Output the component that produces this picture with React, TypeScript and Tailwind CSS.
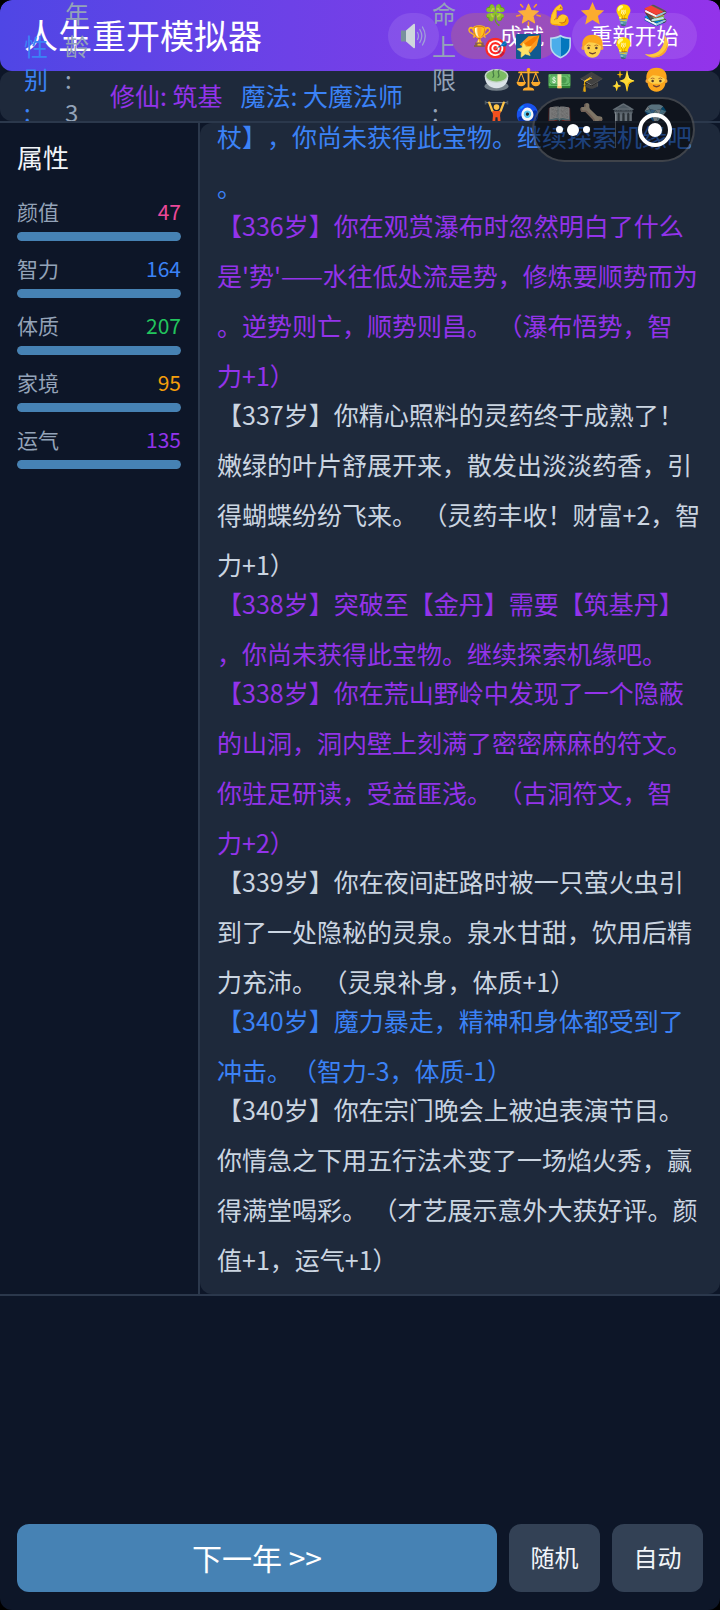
import React, { useState } from 'react'

interface Stat {
  label: string
  value: number
  max: number
  color: string
}

interface LogEntry {
  color: string
  lines: string[]
}

const stats: Stat[] = [
  { label: '颜值', value: 47, max: 10, color: 'text-[#ec4899]' },
  { label: '智力', value: 164, max: 10, color: 'text-[#3b82f6]' },
  { label: '体质', value: 207, max: 10, color: 'text-[#22c55e]' },
  { label: '家境', value: 95, max: 10, color: 'text-[#f59e0b]' },
  { label: '运气', value: 135, max: 10, color: 'text-[#9333ea]' },
]

const Icon: React.FC<{ children: React.ReactNode }> = ({ children }) => (
  <svg viewBox="0 0 24 24" className="size-[25px]" fill="none" aria-hidden="true">
    {children}
  </svg>
)

const starPath = 'M12 1l3.2 7.4 8 .7-6 5.4 1.8 8L12 18.300l-7 4.200 1.800-8-6-5.400 8-.7z'

const GlowingStar = () => (
  <Icon>
    <path d="M12 3l2.700 6.200 6.800.6-5.200 4.500 1.600 6.700-5.900-3.500L6.100 21l1.600-6.700L2.500 9.800l6.800-.6z" fill="#fcb03b" stroke="#fcb03b" strokeLinejoin="round" />
    <path d="M4.500 3.500l2 2.200M19.500 3.500l-2 2.200M.8 14.500l3-.9M23.200 14.500l-3-.9M12 20.500v3" stroke="#fb9a2b" strokeWidth="1.500" strokeLinecap="round" />
  </Icon>
)

const Star = () => (
  <Icon>
    <path d={starPath} fill="#fcac2e" />
  </Icon>
)

const ShootingStar = () => (
  <Icon>
    <rect width="24" height="24" rx="1" fill="#11598f" />
    <path d="M3.500 10L12 2.200l10.500-.7L20 11l-6 7z" fill="#fb9a1e" />
    <path d="M8 9l9-6 5-1.500-3 5-6 6z" fill="#f57c00" />
    <path d="M7 8.500l2.600 4 5-.4-2.800 3.900 1.800 4.600-4.700-1.300-4 3 .2-5-4-2.800 4.700-1.300z" fill="#fee268" stroke="#fee268" strokeWidth=".6" strokeLinejoin="round" />
  </Icon>
)

const Shield = () => (
  <Icon>
    <path d="M12 .8c3 2 6.500 2.500 10 2.600v7.800c0 5.600-4 9.800-10 12.200C6 21 2 16.800 2 11.200V3.400C5.500 3.300 9 2.800 12 .8z" fill="#b8d9ef" />
    <path d="M12 2.600c2.700 1.500 5.500 2 8.500 2.200v6.400c0 4.700-3.200 8.300-8.500 10.600z" fill="#0277bd" />
    <path d="M12 2.600c-2.700 1.500-5.500 2-8.500 2.200v6.400c0 4.700 3.200 8.300 8.500 10.600z" fill="#4badea" />
  </Icon>
)

const Face = ({ beard }: { beard?: boolean }) => (
  <Icon>
    <path d="M2.500 13C1 5 5.500.8 12 .8S23 5 21.500 13z" fill="#fba51c" />
    <circle cx="3.300" cy="13.500" r="1.900" fill="#f2a33a" />
    <circle cx="20.700" cy="13.500" r="1.900" fill="#f2a33a" />
    <path d="M4 11.500c2-1.500 3.500-3.500 5-3.500 3 0 8 1 11 3.500v2c0 5.500-3.500 9.300-8 9.300s-8-3.800-8-9.300z" fill="#fdd04c" />
    {beard && <path d="M3.300 13c2.500 1.500 4 3 5.200 3h7c1.200 0 2.700-1.500 5.200-3 .3 6.500-3.300 10.700-8.700 10.700S3 19.500 3.300 13z" fill="#fba51c" />}
    <circle cx="8.300" cy="13.500" r="1.200" fill="#50382f" />
    <circle cx="15.700" cy="13.500" r="1.200" fill="#50382f" />
    <path d="M6.800 11q1.500-1 3 0M14.200 11q1.500-1 3 0" stroke="#a8652b" strokeWidth=".9" strokeLinecap="round" />
    <path d="M9.300 18q2.700 1.800 5.400 0" stroke="#6d4033" strokeWidth="1.300" strokeLinecap="round" />
  </Icon>
)

const Moon = () => (
  <Icon>
    <path d="M19.500 1c5 6 4.500 14-1 18.500S5 23.500.8 19.300C7 20.500 12.500 19 16 14.500S20 5.500 19.500 1z" fill="#fdc93d" />
    <path d="M22.500 8c.7 5-1 9-4 11.500S10 23.500 4 21.500c6 .8 10-.5 13.500-3.500S22 12 22.500 8z" fill="#f9a22c" />
  </Icon>
)

const Tea = () => (
  <Icon>
    <ellipse cx="12" cy="18.500" rx="11.500" ry="4.300" fill="#75818a" />
    <path d="M.7 8.500h22.600c0 7-4.300 12-11.300 12S.7 15.500.7 8.500z" fill="#dbe3e8" />
    <ellipse cx="12" cy="8.500" rx="11.300" ry="6.500" fill="#c6d6c8" />
    <ellipse cx="12" cy="8.500" rx="10" ry="5.400" fill="#7cbb63" />
    <path d="M9.500 3c-3 2.500 2 4-1 7M14.500 3c-3 2.500 2 4-1 7" stroke="#457b45" strokeWidth="1.200" strokeLinecap="round" />
  </Icon>
)

const Scales = () => (
  <Icon>
    <path d="M12 2v18M3 5.200h18" stroke="#fba92c" strokeWidth="1.800" strokeLinecap="round" />
    <circle cx="12" cy="2.800" r="1.800" fill="#fba92c" />
    <path d="M5 5.500L1.500 15h7zM19 5.500L15.500 15h7z" stroke="#fba92c" strokeWidth="1" />
    <path d="M.5 14.500h9c-.5 3-2 4-4.500 4s-4-1-4.500-4zM14.500 14.500h9c-.5 3-2 4-4.500 4s-4-1-4.500-4zM6.500 22.500c0-2 2-3 5.500-3s5.500 1 5.500 3z" fill="#fba92c" />
  </Icon>
)

const Lifter = () => (
  <Icon>
    <path d="M1 2.500h22" stroke="#7c8790" strokeWidth="1" />
    <path d="M1.500.8v3.400M22.500.8v3.400" stroke="#4d5960" strokeWidth="1.600" />
    <path d="M5 2.500l3 8 2 1.500M19 2.500l-3 8-2 1.500" stroke="#fdc447" strokeWidth="2.200" strokeLinecap="round" strokeLinejoin="round" />
    <circle cx="12" cy="6.800" r="2.700" fill="#fdc447" />
    <path d="M8 10.500h8l-.8 6h-6.400z" fill="#f4511e" />
    <path d="M9.800 16l-.5 6.500M14.200 16l.5 6.500" stroke="#f4511e" strokeWidth="2.600" strokeLinecap="round" />
  </Icon>
)

const Speaker: React.FC<{ muted: boolean }> = ({ muted }) => (
  <svg viewBox="0 0 27 26" className="h-[26px] w-[27px]" fill="none" aria-hidden="true">
    <path d="M1 7.500h5v11H1z" fill="#78909c" />
    <path d="M6 7.500L13.500 1q1.500-1 1.500 1v22q0 2-1.500 1L6 18.500z" fill="#cfd8dc" />
    {!muted && (
      <path
        d="M17.500 9.500q2 3.500 0 7M19.800 6.500q4 6.500 0 13M22.500 4q5.500 9 0 18"
        stroke="#a0a0d8"
        strokeWidth="1.300"
        strokeLinecap="round"
      />
    )}
  </svg>
)

const talents: React.ReactNode[] = [
  '🍀', <GlowingStar />, '💪', <Star />, '💡', '📚',
  '🎯', <ShootingStar />, <Shield />, <Face />, '💡', <Moon />,
  <Tea />, <Scales />, '💵', '🎓', '✨', <Face beard />,
  <Lifter />, '🧿', '📖', '🦴', '🏛️', '💎',
]

const magic = 'text-[#3b82f6]'
const immortal = 'text-[#9333ea]'
const normal = 'text-[#cbd5e1]'

const logs: LogEntry[] = [
  { color: magic, lines: ['杖】，你尚未获得此宝物。继续探索机缘吧', '。'] },
  {
    color: immortal,
    lines: [
      '【336岁】你在观赏瀑布时忽然明白了什么',
      "是'势'——水往低处流是势，修炼要顺势而为",
      '。逆势则亡，顺势则昌。 （瀑布悟势，智',
      '力+1）',
    ],
  },
  {
    color: normal,
    lines: [
      '【337岁】你精心照料的灵药终于成熟了！',
      '嫩绿的叶片舒展开来，散发出淡淡药香，引',
      '得蝴蝶纷纷飞来。 （灵药丰收！财富+2，智',
      '力+1）',
    ],
  },
  {
    color: immortal,
    lines: ['【338岁】突破至【金丹】需要【筑基丹】', '，你尚未获得此宝物。继续探索机缘吧。'],
  },
  {
    color: immortal,
    lines: [
      '【338岁】你在荒山野岭中发现了一个隐蔽',
      '的山洞，洞内壁上刻满了密密麻麻的符文。',
      '你驻足研读，受益匪浅。 （古洞符文，智',
      '力+2）',
    ],
  },
  {
    color: normal,
    lines: [
      '【339岁】你在夜间赶路时被一只萤火虫引',
      '到了一处隐秘的灵泉。泉水甘甜，饮用后精',
      '力充沛。 （灵泉补身，体质+1）',
    ],
  },
  {
    color: magic,
    lines: ['【340岁】魔力暴走，精神和身体都受到了', '冲击。（智力-3，体质-1）'],
  },
  {
    color: normal,
    lines: [
      '【340岁】你在宗门晚会上被迫表演节目。',
      '你情急之下用五行法术变了一场焰火秀，赢',
      '得满堂喝彩。 （才艺展示意外大获好评。颜',
      '值+1，运气+1）',
    ],
  },
]

const Header: React.FC = () => {
  const [muted, setMuted] = useState<boolean>(false)

  return (
    <header className="flex h-[71px] shrink-0 items-center rounded-xl bg-linear-to-r from-[#4f46e5] to-[#9333ea] pr-[23px] pl-6 text-white">
      <h1 className="flex-1 pb-[2px] text-[34px] leading-[48px] whitespace-nowrap">人生重开模拟器</h1>
      <div className="flex gap-3 text-[22px]">
        <button
          aria-label="声音"
          onClick={() => setMuted(!muted)}
          className="flex h-[46px] w-[51px] items-center justify-center rounded-full bg-white/10"
        >
          <Speaker muted={muted} />
        </button>
        <button className="flex h-[46px] w-[109px] items-center justify-between rounded-full bg-[#f59e0b]/20 px-4 pb-[2px]">
          <span className="text-[20px]">🏆</span>
          <span>成就</span>
        </button>
        <button className="h-[46px] w-[125px] rounded-full bg-white/10 pb-[2px] whitespace-nowrap">重新开始</button>
      </div>
    </header>
  )
}

// narrow labels wrap one character per line and overflow upwards
const StatusColumn: React.FC<{ text: string; color: string }> = ({ text, color }) => (
  <div className={`-mb-[7px] w-6 shrink-0 text-[24px] leading-[33px] ${color}`}>
    {text.split('').map((char, i) => (
      <span key={i} className="block">
        {char}
      </span>
    ))}
  </div>
)

const StatusBar: React.FC = () => (
  <div className="flex h-[50px] shrink-0 items-end rounded-xl bg-[#1e293b] pl-6">
    <StatusColumn text="性别:" color="text-[#3b82f6]" />
    <div className="w-[17px] shrink-0" />
    <StatusColumn text="年龄:3" color="text-[#94a3b8]" />
    <div className="flex flex-1 gap-[18px] self-center pl-[21px] text-[25px] whitespace-nowrap">
      <span className="text-[#9333ea]">修仙: 筑基</span>
      <span className="text-[#3b82f6]">魔法: 大魔法师</span>
    </div>
    <StatusColumn text="命上限:" color="text-[#94a3b8]" />
    <div className="-mb-[8px] ml-6 mr-12 grid shrink-0 grid-cols-6 text-[20px] leading-[33px]">
      {talents.map((talent, i) => (
        <span key={i} className="flex h-[33px] w-8 items-center justify-center">
          {talent}
        </span>
      ))}
    </div>
  </div>
)

const Sidebar: React.FC = () => (
  <aside className="w-[200px] shrink-0 border-r-2 border-[#334155]/80 bg-[#0d1628] px-[17px] pt-[14px]">
    <h2 className="text-[26px] leading-10 text-[#f1f5f9]">属性</h2>
    <div className="mt-[18px] flex flex-col gap-[11px]">
      {stats.map((stat) => (
        <div key={stat.label}>
          <div className="flex justify-between text-[21px] leading-8">
            <span className="text-[#94a3b8]">{stat.label}</span>
            <span className={stat.color}>{stat.value}</span>
          </div>
          <div className="mt-[5px] h-[9px] overflow-hidden rounded-full bg-[#334155]">
            <div
              className="h-full rounded-full bg-[#4682b4]"
              style={{ width: `${Math.min(100, (stat.value / stat.max) * 100)}%` }}
            />
          </div>
        </div>
      ))}
    </div>
  </aside>
)

const EventLog: React.FC = () => (
  <section className="flex min-w-0 flex-1 flex-col justify-end overflow-hidden rounded-xl bg-[#1e293b] px-[17px] pb-[10px] text-[25px] leading-[50px] whitespace-nowrap">
    {logs.map((log, i) => (
      <p key={i} className={`shrink-0 not-last:-mb-[11px] ${log.color}`}>
        {log.lines.map((line) => (
          <span key={line} className="block">
            {line}
          </span>
        ))}
      </p>
    ))}
  </section>
)

const Capsule: React.FC = () => (
  <div className="absolute top-[97px] right-[25px] flex h-[65px] w-[163px] items-center rounded-full border-2 border-white/20 bg-black/50">
    <button aria-label="更多" className="flex flex-1 items-center justify-center gap-1 pr-1">
      <span className="size-[7px] rounded-full bg-white" />
      <span className="size-3 rounded-full bg-white" />
      <span className="size-[7px] rounded-full bg-white" />
    </button>
    <span className="h-9 w-px bg-white/20" />
    <button aria-label="关闭" className="flex flex-1 items-center justify-center">
      <span className="flex size-[34px] items-center justify-center rounded-full border-4 border-white">
        <span className="size-[14px] rounded-full bg-white" />
      </span>
    </button>
  </div>
)

const App: React.FC = () => {
  return (
    <div className="bg-black">
      <div className="relative flex h-screen flex-col overflow-hidden rounded-xl bg-[#0d1628] font-['Noto_Sans_CJK_SC','Noto_Color_Emoji',sans-serif] [text-spacing-trim:space-all]">
        <Header />
        <StatusBar />
        <main className="flex min-h-0 flex-1 border-y-2 border-[#334155]/80 bg-[#0d1628]">
          <Sidebar />
          <EventLog />
        </main>
        <footer className="flex shrink-0 gap-3 px-[17px] pt-[228px] pb-[18px]">
          <button className="h-[68px] flex-1 rounded-xl bg-[#4682b4] pb-[2px] text-[30px] text-white">
            下一年 &gt;&gt;
          </button>
          <button className="h-[68px] w-[91px] rounded-xl bg-[#334155] pb-[2px] text-[24px] text-[#f1f5f9]">随机</button>
          <button className="h-[68px] w-[91px] rounded-xl bg-[#334155] pb-[2px] text-[24px] text-[#f1f5f9]">自动</button>
        </footer>
        <Capsule />
      </div>
    </div>
  )
}

export default App
